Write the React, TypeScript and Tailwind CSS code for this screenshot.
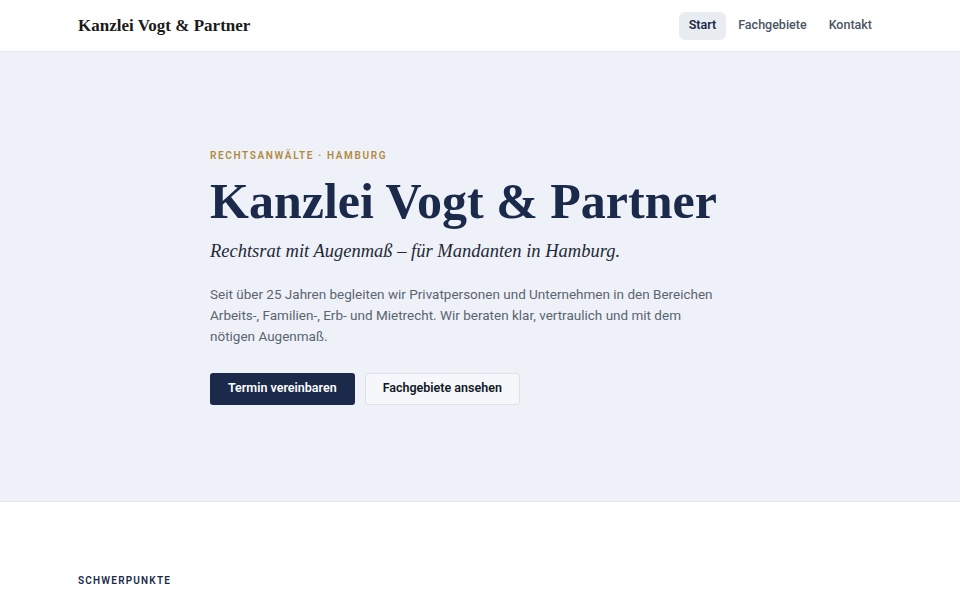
import React from "react";

const serif = "font-['Liberation_Serif','Georgia',serif]";
const sans = "font-['Roboto','Inter',sans-serif]";

const NAV = ["Start", "Fachgebiete", "Kontakt"];

export default function App() {
  return (
    <div className={`min-h-screen bg-white ${sans}`}>
      <header className="border-b border-gray-200 bg-white">
        <div className="mx-auto flex h-[51px] max-w-[804px] items-center justify-between">
          <span className={`${serif} text-[17px] font-bold text-[#1a1a1a]`}>Kanzlei Vogt &amp; Partner</span>
          <nav className="flex items-center gap-[2px]">
            {NAV.map((n, i) => (
              <a
                key={n}
                className={
                  i === 0
                    ? "flex h-[28px] items-center rounded-md bg-[#e9ecf1] px-[10px] text-[12.5px] font-semibold text-[#1b2a4a]"
                    : "flex h-[28px] items-center rounded-md px-[10px] text-[12.5px] font-medium text-[#4b5563]"
                }
              >
                {n}
              </a>
            ))}
          </nav>
        </div>
      </header>

      <section className="border-b border-gray-200 bg-[#eef2f8]">
        <div className="mx-auto max-w-[540px] pb-[96px] pt-[96px]">
          <p className="text-[10px] font-semibold uppercase tracking-[0.165em] text-[#b08a3e]">
            Rechtsanwälte · Hamburg
          </p>
          <h1 className={`${serif} mt-[12px] text-[50px] font-bold leading-[53px] text-[#1b2a4a]`}>
            Kanzlei Vogt &amp; Partner
          </h1>
          <p className={`${serif} mt-[10px] text-[18.5px] italic text-[#1f2937]`}>
            Rechtsrat mit Augenmaß – für Mandanten in Hamburg.
          </p>
          <p className="mt-[18px] max-w-[510px] text-[13.5px] leading-[21px] text-[#5b6472]">
            Seit über 25 Jahren begleiten wir Privatpersonen und Unternehmen in den Bereichen Arbeits-, Familien-, Erb- und
            Mietrecht. Wir beraten klar, vertraulich und mit dem nötigen Augenmaß.
          </p>
          <div className="mt-[26px] flex gap-[10px]">
            <a className="flex h-[32px] items-center rounded-[3px] bg-[#1b2a4a] px-[18px] text-[12.5px] font-semibold text-white">
              Termin vereinbaren
            </a>
            <a className="flex h-[32px] items-center rounded-[3px] border border-[#dde2ea] bg-[#f5f7fa] px-[17px] text-[12.5px] font-semibold text-[#111827]">
              Fachgebiete ansehen
            </a>
          </div>
        </div>
      </section>

      <section className="bg-white">
        <div className="mx-auto max-w-[804px] pt-[71px]">
          <h2 className="text-[10px] font-semibold uppercase tracking-[0.12em] text-[#1b2a4a]">Schwerpunkte</h2>
        </div>
      </section>
    </div>
  );
}
